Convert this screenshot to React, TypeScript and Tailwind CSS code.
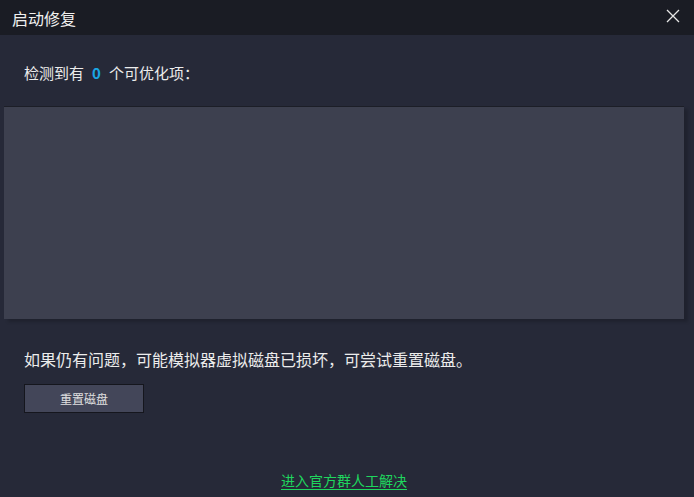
export default function App() {
  const font = { fontFamily: '"Noto Sans CJK SC", "Microsoft YaHei", sans-serif' };
  return (
    <div className="w-[694px] h-[497px] bg-[#262938] flex flex-col text-[#ececec] overflow-hidden" style={font}>
      <div className="h-[35px] bg-[#1a1c24] flex items-center justify-between pl-[12px] pr-[14px] shrink-0">
        <span className="text-[16px] leading-none text-[#f0f0f0]">启动修复</span>
        <svg width="14" height="14" viewBox="0 0 14 14" className="mt-[-3px]">
          <path d="M1 1 L13 13 M13 1 L1 13" stroke="#e6e6e6" strokeWidth="1.3" />
        </svg>
      </div>
      <div className="pl-[24px] pt-[27px] h-[71px] text-[15px] leading-[22px]">
        检测到有<span className="text-[#1aa6e4] font-bold mx-[8px]">0</span>个可优化项：
      </div>
      <div className="ml-[4px] w-[680px] h-[213px] bg-[#3d404f] border-t border-[#1c1e27] shadow-[4px_3px_3px_rgba(0,0,0,0.18)]"></div>
      <div className="pl-[24px] pt-[29px] text-[16px] leading-[22px]">
        如果仍有问题，可能模拟器虚拟磁盘已损坏，可尝试重置磁盘。
      </div>
      <div className="pl-[24px] pt-[14px]">
        <button className="w-[120px] h-[29px] bg-[#434659] border border-[#15161d] text-[12px] text-[#e0e0e0] flex items-center justify-center">
          重置磁盘
        </button>
      </div>
      <div className="flex-1 flex items-end justify-center pb-[7px]">
        <a className="text-[14px] leading-[20px] text-[#1fd65e] underline underline-offset-[3px] mr-[6px]" href="#">
          进入官方群人工解决
        </a>
      </div>
    </div>
  );
}
